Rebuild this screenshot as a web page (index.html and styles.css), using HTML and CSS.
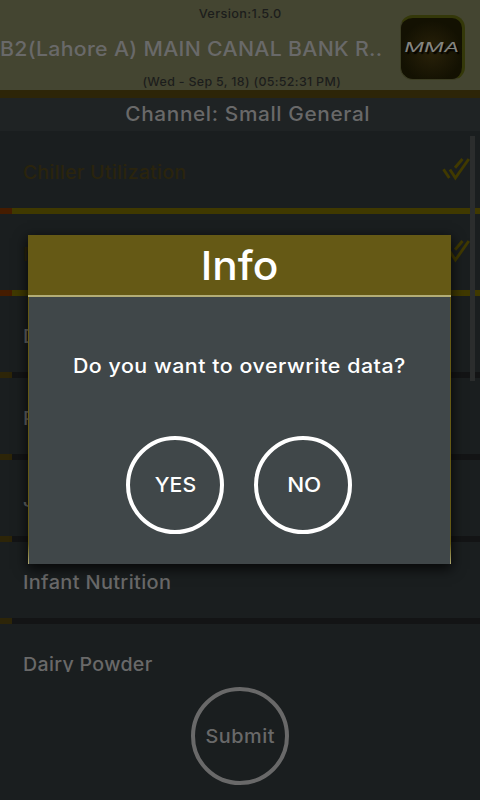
FILE: index.html
```html
<!DOCTYPE html>
<html lang="en">
<head>
<meta charset="utf-8">
<title>Small General</title>
<link rel="stylesheet" href="styles.css">
</head>
<body>
<div class="app">
  <header class="header">
    <div class="version"><span>Version:1.5.0</span></div>
    <div class="shop"><span>B2(Lahore A) MAIN CANAL BANK R..</span></div>
    <div class="date"><span>(Wed - Sep 5, 18) (05:52:31 PM)</span></div>
    <div class="logo"><span>MMA</span></div>
  </header>
  <div class="channel"><span>Channel: Small General</span></div>
  <main class="list">
    <div class="row done"><span class="chiller">Chiller Utilization</span>
      <svg class="check" viewBox="0 0 28 24"><path d="M1.500 12.300 7.300 21M7.900 12.500 13.400 21 26.800 2M13 10.700 20.500 2"/></svg>
    </div>
    <div class="row done"><span>Must Have</span>
      <svg class="check" viewBox="0 0 28 24"><path d="M1.500 12.300 7.300 21M7.900 12.500 13.400 21 26.800 2M13 10.700 20.500 2"/></svg>
    </div>
    <div class="row"><span>Dairy</span></div>
    <div class="row"><span>Powder</span></div>
    <div class="row"><span>Juices</span></div>
    <div class="row"><span class="infant">Infant Nutrition</span></div>
    <div class="row"><span class="dairy">Dairy Powder</span></div>
    <div class="scrollbar"></div>
  </main>
  <footer class="footer"><div class="circle submit"><span>Submit</span></div></footer>
  <section class="dialog">
    <h1><span>Info</span></h1>
    <div class="body">
      <p><span>Do you want to overwrite data?</span></p>
      <div class="actions">
        <div class="circle yes"><span>YES</span></div>
        <div class="circle no"><span>NO</span></div>
      </div>
    </div>
  </section>
</div>
</body>
</html>
```
FILE: styles.css
```css
* { box-sizing: border-box; }
body { margin: 0; background: #1a1e1f; font-family: Inter, "Liberation Sans", sans-serif; font-weight: 500; }
span { display: inline-block; white-space: nowrap; transform: scaleX(1.06); }
.app { position: relative; width: 480px; height: 800px; overflow: hidden; display: flex; flex-direction: column; background: #1a1e1f; }
.header { position: relative; height: 98px; background: #444531; border-bottom: 8px solid #2d2508; color: #1c1d1c; display: flex; flex-direction: column; flex: none; }
.version { height: 28px; line-height: 28px; text-align: center; font-size: 12px; letter-spacing: 0.35px; }
.shop { height: 44px; line-height: 43px; font-size: 20px; letter-spacing: 0.3px; color: #696969; }
.shop span { transform: scaleX(1.063); transform-origin: left; }
.date { height: 18px; line-height: 19px; text-align: center; font-size: 12px; padding-left: 3px; letter-spacing: 0.3px; }
.date span { transform: scaleX(1.037); }
.logo { position: absolute; left: 400px; top: 15px; width: 65px; height: 65px; border-radius: 13px; background: radial-gradient(circle at 50% 55%, #292109, #131102 68%); border: 1px solid #3b3c23; border-top: 3px solid #343809; border-right: 3px solid #343809; display: flex; align-items: center; justify-content: center; }
.logo span { font-size: 12.500px; font-style: italic; font-weight: 400; color: #858580; transform: translate(0, -1px) scaleX(1.76); text-shadow: 1px 2px 1px #000; }
.channel { height: 33px; line-height: 32px; flex: none; background: #1f2324; color: #696969; text-align: center; font-size: 20px; padding-left: 15px; letter-spacing: 0.6px; }
.channel span { transform: scaleX(1.04); }
.list { position: relative; height: 541px; padding-top: 1px; flex: none; overflow: hidden; }
.row { position: relative; height: 82px; padding: 3px 10px 0 23px; display: flex; align-items: center; justify-content: space-between; color: #696969; font-size: 18.500px; letter-spacing: 0.3px; border-bottom: 6px solid #131415; }
.row span { transform-origin: left; }
.row .chiller { transform: scaleX(1.052); }
.row .infant { transform: scaleX(1.08); }
.row::after { content: ""; position: absolute; left: 0; bottom: -6px; width: 12px; height: 6px; background: #2d2508; }
.done { color: #2a240d; border-bottom-color: #403900; }
.done::after { background: #451c00; }
.check { width: 28px; height: 24px; margin-top: -5px; }
.check path { fill: none; stroke: #403900; stroke-width: 2.900; }
.scrollbar { position: absolute; left: 470px; top: 5px; width: 5px; height: 245px; background: #2b2d2d; }
.footer { flex: 1; display: flex; justify-content: center; align-items: flex-start; padding-top: 15px; }
.circle { width: 98px; height: 98px; border: 4px solid #fff; border-radius: 50%; display: flex; align-items: center; justify-content: center; font-size: 20px; color: #fff; }
.submit { border-color: #696969; color: #696969; font-size: 19px; letter-spacing: 0.5px; }
.submit span { transform: scaleX(1.045); }
.no span { transform: translateX(1px) scaleX(1.12); }
.dialog { position: absolute; left: 28px; top: 235px; width: 423px; height: 329px; background: #404749; color: #fff; box-shadow: 0 4px 12px 1px rgba(0,0,0,.75); display: flex; flex-direction: column; }
.dialog h1 { margin: 0; height: 62px; line-height: 62px; text-align: center; font-size: 40px; font-weight: 500; background: #655915; border-bottom: 2px solid #b3ad76; }
.body { flex: 1; border: solid #655915; border-width: 0 1px; border-image: linear-gradient(#655915 92%, #b3ad76) 1; border-image-width: 0 1px; padding-top: 54px; }
.body p { margin: 0; height: 85px; line-height: 30px; text-align: center; font-size: 20px; letter-spacing: 0.5px; }
.body p span { transform: translateX(-0.5px) scaleX(1.068); }
.actions { display: flex; justify-content: center; gap: 30px; padding-right: 1px; }
```
